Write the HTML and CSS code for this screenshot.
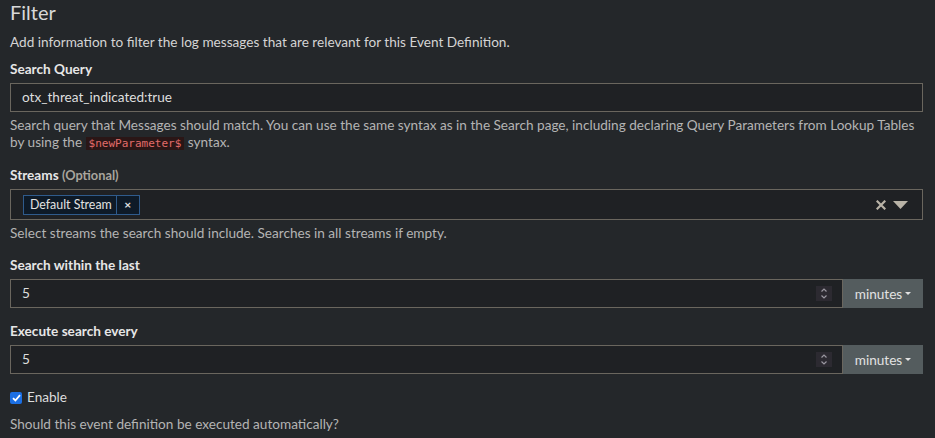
FILE: index.html
```html
<!DOCTYPE html>
<html lang="en">
<head>
<meta charset="utf-8">
<title>Filter</title>
<link rel="stylesheet" href="styles.css">
</head>
<body>
<div class="page">
  <h2 class="title">Filter</h2>
  <p class="desc">Add information to filter the log messages that are relevant for this Event Definition.</p>

  <div class="group">
    <label class="label">Search Query</label>
    <div class="text-input">otx_threat_indicated:true</div>
    <p class="help">Search query that Messages should match. You can use the same syntax as in the Search page, including declaring Query Parameters from Lookup Tables by using the <code class="code">$newParameter$</code> syntax.</p>
  </div>

  <div class="group">
    <label class="label">Streams <span class="optional">(Optional)</span></label>
    <div class="select">
      <div class="tags">
        <span class="tag"><span class="tag-text">Default Stream</span><span class="tag-remove">×</span></span>
      </div>
      <div class="select-icons">
        <svg class="clear" width="10" height="10" viewBox="0 0 10 10"><path d="M1.5 1.5 L8.5 8.5 M8.5 1.5 L1.5 8.5" stroke="#b9b3a7" stroke-width="2.2" stroke-linecap="square"/></svg>
        <svg class="arrow" width="15" height="8" viewBox="0 0 15 8"><path d="M0 0 H15 L7.5 8 Z" fill="#b9b3a7"/></svg>
      </div>
    </div>
    <p class="help">Select streams the search should include. Searches in all streams if empty.</p>
  </div>

  <div class="group">
    <label class="label">Search within the last</label>
    <div class="input-group">
      <div class="num-input">
        <span class="num-value">5</span>
        <span class="spinner"><svg width="16" height="15" viewBox="0 0 16 15"><path d="M5.5 5.5 L8 3 L10.5 5.5 M5.5 9.5 L8 12 L10.5 9.5" stroke="#9a97a0" stroke-width="1.2" fill="none"/></svg></span>
      </div>
      <button class="addon">minutes<span class="caret"></span></button>
    </div>
  </div>

  <div class="group">
    <label class="label">Execute search every</label>
    <div class="input-group">
      <div class="num-input">
        <span class="num-value">5</span>
        <span class="spinner"><svg width="16" height="15" viewBox="0 0 16 15"><path d="M5.5 5.5 L8 3 L10.5 5.5 M5.5 9.5 L8 12 L10.5 9.5" stroke="#9a97a0" stroke-width="1.2" fill="none"/></svg></span>
      </div>
      <button class="addon">minutes<span class="caret"></span></button>
    </div>
  </div>

  <div class="check-row">
    <span class="checkbox"><svg width="9" height="8" viewBox="0 0 9 8"><path d="M1 4.2 L3.4 6.5 L8 1.2" stroke="#fff" stroke-width="1.8" fill="none"/></svg></span>
    <span class="check-label">Enable</span>
  </div>
  <p class="help last">Should this event definition be executed automatically?</p>
</div>
</body>
</html>
```
FILE: styles.css
```css
html, body {
  margin: 0;
  padding: 0;
  background: #24272a;
}
body {
  font-family: Lato, "Noto Sans", sans-serif;
  font-size: 13.6px;
  line-height: 17px;
  color: #d2d2d2;
}
.page {
  padding: 0 12px 0 10px;
}
.title {
  margin: 0 0 10px;
  font-size: 20px;
  line-height: 24px;
  font-weight: 400;
  color: #d8d8d8;
}
.desc {
  margin: 0 0 10px;
  color: #d4d4d4;
}
.group {
  margin-bottom: 15px;
}
.label {
  display: block;
  margin-bottom: 5px;
  font-weight: 700;
  color: #e6e6e6;
}
.optional {
  color: #a9a59d;
  font-size: 12.8px;
}
.text-input {
  box-sizing: border-box;
  height: 29px;
  padding: 0 11px;
  border: 1px solid #6a665e;
  background: #1f2124;
  color: #dedede;
  line-height: 27px;
}
.help {
  margin: 5px 0 0;
  color: #b4b4b4;
}
.help.last {
  margin-top: 10px;
}
.code {
  font-family: "DejaVu Sans Mono", "Liberation Mono", monospace;
  font-size: 11px;
  line-height: 16px;
  padding: 0 3px;
  background: #2a1616;
  color: #e26c6a;
}
.select {
  box-sizing: border-box;
  height: 31px;
  border: 1px solid #6a665e;
  background: #1f2124;
  display: flex;
  align-items: center;
  padding: 0 14px 0 12px;
}
.tags {
  flex: 1;
  display: flex;
}
.tag {
  display: inline-flex;
  height: 20px;
  box-sizing: border-box;
  border: 1px solid #2f5b8c;
  background: #0e1a27;
  color: #e2e2e2;
  font-size: 12.4px;
  line-height: 18px;
}
.tag-text {
  padding: 0 4px 0 6px;
  border-right: 1px solid #2f5b8c;
}
.tag-remove {
  width: 22px;
  text-align: center;
  font-weight: 700;
  font-size: 12px;
}
.select-icons {
  display: flex;
  align-items: center;
  gap: 7px;
}
.input-group {
  display: flex;
  height: 29px;
}
.num-input {
  flex: 1;
  box-sizing: border-box;
  display: flex;
  align-items: center;
  padding: 0 10px 0 11px;
  border: 1px solid #6a665e;
  background: #1f2124;
  color: #dedede;
}
.num-value {
  flex: 1;
}
.spinner {
  display: flex;
  width: 16px;
  height: 15px;
  background: #2c2a31;
}
.addon {
  width: 80px;
  border: 0;
  margin: 0;
  padding: 0;
  background: #545c5e;
  color: #e2e2e2;
  font-family: Lato, "Noto Sans", sans-serif;
  font-size: 13.6px;
  display: flex;
  align-items: center;
  justify-content: center;
}
.caret {
  display: inline-block;
  margin-left: 3px;
  width: 0;
  height: 0;
  border-left: 3.5px solid transparent;
  border-right: 3.5px solid transparent;
  border-top: 3.5px solid #e2e2e2;
}
.check-row {
  display: flex;
  align-items: center;
  gap: 5px;
}
.checkbox {
  width: 12px;
  height: 12px;
  border-radius: 2px;
  background: #1b6fe4;
  display: flex;
  align-items: center;
  justify-content: center;
}
.check-label {
  color: #dcdcdc;
}
```
